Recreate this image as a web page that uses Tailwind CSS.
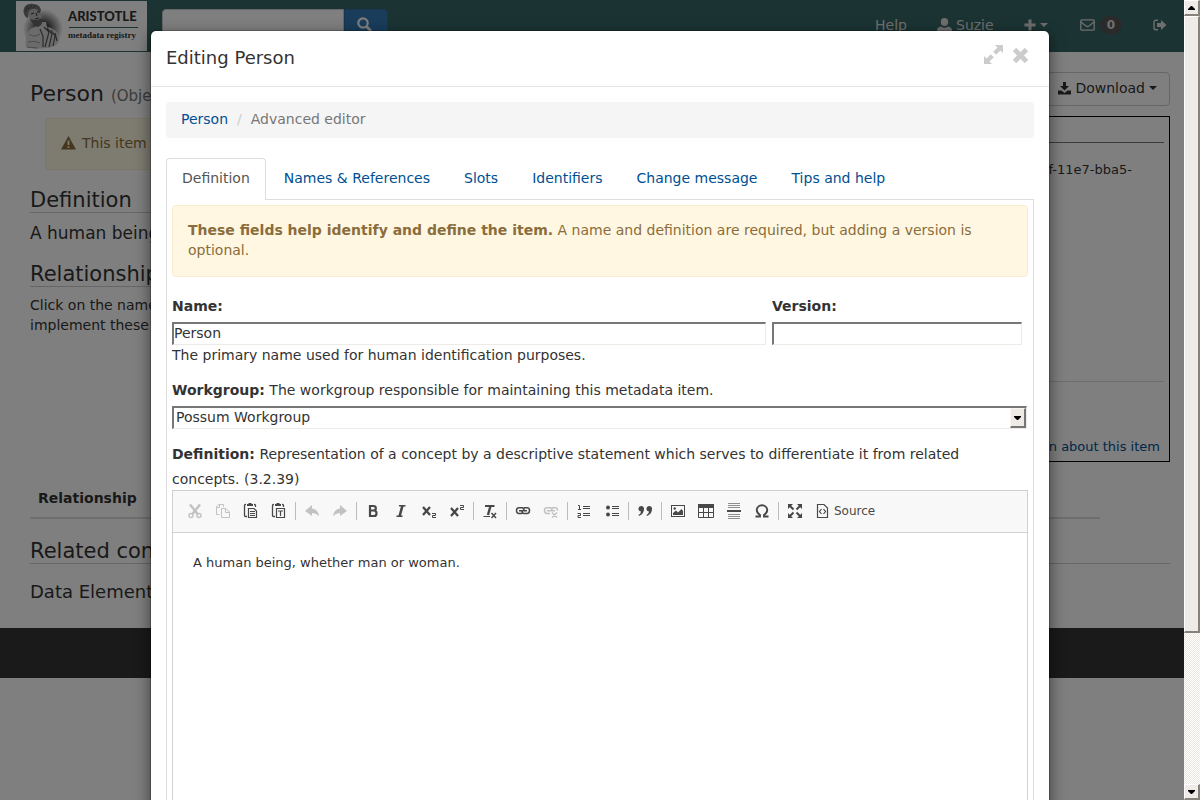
<!DOCTYPE html>
<html lang="en">
<head>
<meta charset="utf-8">
<title>Editing Person</title>
<script src="https://cdn.jsdelivr.net/npm/@tailwindcss/browser@4"></script>
</head>
<body class="relative h-screen overflow-hidden bg-white font-['DejaVu_Sans',sans-serif] text-sm leading-5 text-[#333]">

<!-- Page behind the dialog -->
<div class="mr-4">
  <header class="flex h-[52px] items-start bg-[#376866] pr-[17px] pl-4">
    <a href="#" aria-label="Aristotle metadata registry" class="mt-px block">
      <svg width="131" height="50" viewBox="0 0 131 50">
        <defs><radialGradient id="halo"><stop offset=".3" stop-color="#444"/><stop offset="1" stop-color="#fff"/></radialGradient></defs>
        <rect width="131" height="50" fill="#fff"/>
        <ellipse cx="27" cy="28" rx="20" ry="20" fill="url(#halo)"/>
        <path d="M10 46C9 40 10 31 16 27L21 25L21 21L30 21L31 26C39 27 44 33 43 40C41 45 36 47 30 47C22 48 14 48 10 46Z" fill="#d6d6d6"/>
        <path d="M10 11C10 6 13 4 18 4C22 4 25 8 25 13C26 19 27 22 24 23C19 24 16 21 14 18Z" fill="#bbb"/>
        <path d="M8 13C6 6 11 2 17 3C22 3 25 6 25 10L23 11C21 7 18 7 14 9C12 11 12 14 12 17C10 17 9 15 8 13Z" fill="#777"/>
        <path d="M9 11Q11 8 12 5M12 8Q15 7 16 4M17 7Q19 6 19 4" stroke="#444" stroke-width=".8" fill="none"/>
        <path d="M14 18C16 22 18 25 22 26L25 24C27 21 26 18 25 17C22 20 18 19 14 18Z" fill="#666"/>
        <path d="M15 13L18 12M21 11L24 11M20 12L21 15M19 18L23 17" stroke="#333" fill="none"/>
        <path d="M28 26L33 31L29 46M31 27L36 33L33 46M35 29L39 35L37 45M39 32L41 40M24 28L27 35L27 46" stroke="#555" fill="none" stroke-width="1.200"/>
        <path d="M13 33Q18 37 24 33M12 41Q18 39 24 42M11 46L22 47" stroke="#999" fill="none"/>
        <text x="52" y="20" font-family="Lato, sans-serif" font-weight="900" font-size="13" fill="#333">ARISTOTLE</text>
        <path d="M53 26.500H122" stroke="#376866"/>
        <text x="52" y="37" font-family="Liberation Serif, serif" font-weight="700" font-size="9" fill="#333">metadata registry</text>
      </svg>
    </a>
    <form class="mt-[9px] ml-[15px] flex h-[34px]">
      <input type="search" aria-label="Search" class="w-[182px] rounded-l border border-[#ccc] bg-white px-3">
      <button type="button" aria-label="Submit search" class="flex w-11 items-center justify-center rounded-r border border-[#2e6da4] bg-[#337ab7] pr-1 pb-1">
        <svg width="15" height="15" viewBox="0 0 15 15" fill="none" stroke="#fff"><circle cx="6" cy="6" r="4.7" stroke-width="2.2"/><path d="M9.500 9.500L14 14" stroke-width="2.800"/></svg>
      </button>
    </form>
    <nav class="mt-[15px] ml-auto flex h-5 items-center text-[#ddd]">
      <a href="#" class="mr-[30px]">Help</a>
      <a href="#" class="mr-[30px] flex items-center gap-1"><svg width="15" height="14" viewBox="0 0 15 14" fill="currentColor"><ellipse cx="7.500" cy="4" rx="3.700" ry="4"/><path d="M0 14V12Q0 9.500 4 8.500Q7.500 11 11 8.500Q15 9.500 15 12V14Z"/></svg>Suzie</a>
      <a href="#" aria-label="Create" class="mr-[32px] flex items-center gap-1"><svg width="12" height="12" viewBox="0 0 12 12" stroke="currentColor" stroke-width="3"><path d="M6 .5V11.500M.5 6H11.500"/></svg><svg width="8" height="4" viewBox="0 0 8 4" fill="currentColor"><path d="M0 0H8L4 4Z"/></svg></a>
      <a href="#" class="mr-[31px] flex items-center gap-[5px]"><svg width="15" height="12" viewBox="0 0 15 12" fill="none" stroke="currentColor" stroke-width="1.300"><rect x=".8" y=".8" width="13.400" height="10.400" rx="1"/><path d="M1 3L6 7Q7.500 8 9 7L14 3"/></svg><span class="rounded-[10px] bg-[#555] px-[7px] py-[3px] text-xs leading-3 font-bold">0</span></a>
      <a href="#" aria-label="Log out"><svg width="14" height="12" viewBox="0 0 14 12"><path d="M5 1.200H3Q1 1.200 1 3V9Q1 10.800 3 10.800H5" fill="none" stroke="currentColor" stroke-width="1.400"/><path d="M4 4H8V1L13.500 6L8 11V8H4Z" fill="currentColor"/></svg></a>
    </nav>
  </header>

  <div class="flex gap-5 pr-[14px] pl-[30px]">
    <main class="h-[576px] min-w-0 flex-1 pt-[30px]">
      <h1 class="text-[22px] leading-6">Person <small class="text-[15px] text-[#777]">(Object</small></h1>
      <div class="mt-[10px] ml-[15px] flex h-[52px] items-center gap-[6px] rounded border border-[#faebcc] bg-[#fcf8e3] px-[15px] pb-0.5 text-[#8a6d3b]">
        <svg width="15" height="14" viewBox="0 0 15 14"><path d="M7.500 0L15 13.500H0Z" fill="currentColor"/><path d="M7.500 4.500V9M7.500 10.200V12" stroke="#fcf8e3" stroke-width="1.800"/></svg>
        This item
      </div>
      <h2 class="mt-[19px] border-b border-[#ccc] text-[21px] leading-[23px]">Definition</h2>
      <p class="mt-2 text-[17px] leading-6">A human being</p>
      <h2 class="mt-[18px] border-b border-[#ccc] text-[21px] leading-[23px]">Relationships</h2>
      <p class="mt-2 w-[340px]">Click on the name<br>implement these</p>
      <table class="mt-[145px] w-[1070px]">
        <thead><tr class="border-b-2 border-[#ddd]"><th class="px-2 pt-2 pb-[9px] text-left leading-5">Relationship</th></tr></thead>
      </table>
      <h2 class="mt-5 w-[1140px] border-b border-[#ccc] text-[21px] leading-6">Related content</h2>
      <p class="mt-4 text-lg leading-6">Data Elements</p>
    </main>
    <aside class="w-[260px] pt-5">
      <div class="flex justify-end"><button type="button" class="flex h-[34px] items-center gap-1 rounded border border-[#ccc] px-3 pb-0.5"><svg width="13" height="13" viewBox="0 0 13 13" fill="currentColor"><path d="M5 0H8V4H11L6.500 8.500L2 4H5Z"/><path d="M0 8.500H3.500L6.500 11L9.500 8.500H13V12.500H0Z"/></svg>Download<svg width="8" height="4" viewBox="0 0 8 4" fill="currentColor"><path d="M0 0H8L4 4Z"/></svg></button></div>
      <div class="mt-[10px] flex h-[346px] flex-col border border-black px-[5px] text-right text-[13px]">
        <div class="h-[26px] border-b border-[#777]"></div>
        <p class="mt-[17px] pr-8">4c1b7e2f-11e7-bba5-</p>
        <div class="mt-auto border-b border-[#ddd]"></div>
        <a href="#" class="mt-[55px] mr-1 mb-1 text-[#004f92]">More information about this item</a>
      </div>
    </aside>
  </div>
  <footer class="h-[50px] bg-[#343434]"></footer>
</div>

<!-- Backdrop and dialog -->
<div class="absolute inset-y-0 right-4 left-0 bg-black/50"></div>
<div class="absolute inset-0 overflow-hidden pt-[30px]">
  <section role="dialog" aria-label="Editing Person" class="mx-auto max-w-[900px] rounded-md border border-black/20 bg-white bg-clip-padding shadow-[0_5px_15px_rgba(0,0,0,0.5)]">
    <div class="flex h-14 justify-between border-b border-[#e5e5e5] px-[15px] pt-[14px]">
      <h4 class="text-lg leading-[26px]">Editing Person</h4>
      <div class="flex gap-[10px] pr-[6px] text-[#ccc]">
        <button type="button" aria-label="Expand" class="h-[19px]"><svg width="19" height="19" viewBox="0 0 19 19"><path d="M11 0H19V8L16.500 5.500L12.200 9.800L9.200 6.800L13.500 2.500ZM0 11L2.500 13.500L6.800 9.200L9.800 12.200L5.500 16.500L8 19H0Z" fill="currentColor"/><path d="M7.500 7.500L11.500 11.500" stroke="#fff" stroke-width="2.500"/></svg></button>
        <button type="button" aria-label="Close" class="mt-[3px] h-[15px]"><svg width="15" height="15" viewBox="0 0 15 15" stroke="currentColor" stroke-width="4.800" stroke-linejoin="round"><path d="M1.500 1.500L13.500 13.500M13.500 1.500L1.500 13.500"/></svg></button>
      </div>
    </div>
    <div class="p-[15px]">
      <nav aria-label="Breadcrumb" class="flex h-9 items-center rounded bg-[#f5f5f5] px-[15px] pb-0.5">
        <a href="#" class="text-[#004f92]">Person</a><span class="px-[9px] text-[#ccc]">/</span><span class="text-[#777]">Advanced editor</span>
      </nav>
      <div class="mt-5 flex border-b border-[#ddd] leading-5 text-[#004f92]">
        <a href="#" class="-mb-px mr-0.5 rounded-t border border-b-0 border-[#ddd] bg-white px-[15px] pt-[9px] pb-3 text-[#555]">Definition</a>
        <a href="#" class="mr-0.5 px-4 pt-[10px]">Names &amp; References</a>
        <a href="#" class="mr-0.5 px-4 pt-[10px]">Slots</a>
        <a href="#" class="mr-0.5 px-4 pt-[10px]">Identifiers</a>
        <a href="#" class="mr-0.5 px-4 pt-[10px]">Change message</a>
        <a href="#" class="px-4 pt-[10px]">Tips and help</a>
      </div>
      <div class="border-x border-[#ddd] px-[5px] pt-[5px]">
        <div class="rounded border border-[#faebcc] bg-[#fff7e2] px-[15px] pt-[14px] pb-4 text-[#8a6d3b]"><strong>These fields help identify and define the item.</strong> A name and definition are required, but adding a version is optional.</div>
        <div class="mt-[19px] flex gap-[6px] pr-[6px]">
          <div class="flex-1">
            <label for="name" class="block font-bold">Name:</label>
            <input id="name" value="Person" class="mt-[6px] block h-[23px] w-full border-t-2 border-r border-b border-l-2 border-t-[#777] border-r-[#eeebe7] border-b-[#eeebe7] border-l-[#777] bg-white pb-0.5">
            <p>The primary name used for human identification purposes.</p>
          </div>
          <div class="w-[250px]">
            <label for="version" class="block font-bold">Version:</label>
            <input id="version" class="mt-[6px] block h-[23px] w-full border-t-2 border-r border-b border-l-2 border-t-[#777] border-r-[#eeebe7] border-b-[#eeebe7] border-l-[#777] bg-white">
          </div>
        </div>
        <p class="mt-[15px]"><label for="workgroup" class="font-bold">Workgroup:</label> The workgroup responsible for maintaining this metadata item.</p>
        <div class="relative mt-[6px] mr-px">
          <select id="workgroup" class="block h-[23px] w-full appearance-none border-t-2 border-r border-b border-l-2 border-t-[#777] border-r-[#eeebe7] border-b-[#eeebe7] border-l-[#777] bg-white pb-0.5 pl-0.5 leading-[18px]"><option>Possum Workgroup</option></select>
          <span class="pointer-events-none absolute top-0.5 right-px flex h-5 w-4 items-center justify-center border-t border-r-2 border-b-2 border-l border-t-[#f8f6f3] border-r-[#777] border-b-[#777] border-l-[#f8f6f3] bg-[#eeebe7]"><svg width="7" height="4" viewBox="0 0 7 4"><path d="M0 0H7V1L4 4H3L0 1Z"/></svg></span>
        </div>
        <p class="mt-[13px] leading-[25px]"><strong>Definition:</strong> Representation of a concept by a descriptive statement which serves to differentiate it from related concepts. (3.2.39)</p>
        <div class="-mt-0.5 h-[420px] border border-[#d1d1d1]">
          <div role="toolbar" aria-label="Editor" class="flex h-[42px] items-center border-b border-[#d1d1d1] bg-[#f8f8f8] pb-px pl-2 text-[#484848]">
            <button type="button" aria-label="Cut" class="flex h-7 w-7 items-center justify-center opacity-30"><svg width="16" height="16" viewBox="0 0 16 16" fill="none" stroke="currentColor"><path d="M3 1.500L11 11.500M13 1.500L5 11.500" stroke-width="2.400"/><circle cx="4" cy="12.500" r="2" stroke-width="1.400"/><circle cx="12" cy="12.500" r="2" stroke-width="1.400"/></svg></button>
            <button type="button" aria-label="Copy" class="flex h-7 w-7 items-center justify-center opacity-30"><svg width="16" height="16" viewBox="0 0 16 16" fill="none" stroke="currentColor"><path d="M4.500 11.500H1.500V3.500L4 1.500H8.500V4M6.500 5.500H11L14.500 9V14.500H6.500ZM10.500 5.500V9.500H14.500M4.500 1.500V4.500H1.500"/></svg></button>
            <button type="button" aria-label="Paste" class="flex h-7 w-7 items-center justify-center"><svg width="16" height="16" viewBox="0 0 16 16" fill="none" stroke="currentColor"><path d="M3 1.500H2.500Q1.500 1.500 1.500 2.500V12.500Q1.500 13.500 2.500 13.500H4M11 1.500H11.500Q12.500 1.500 12.500 2.500V4" stroke-width="1.300"/><path d="M4 1H5.500V0H8.500V1H10V3H4Z" fill="currentColor" stroke="none"/><path d="M5.500 5.500H11L13.500 8V14.500H5.500ZM7 8.500H12M7 10.500H12M7 12.500H12" stroke-width="1.200"/></svg></button>
            <button type="button" aria-label="Paste as plain text" class="flex h-7 w-7 items-center justify-center"><svg width="16" height="16" viewBox="0 0 16 16" fill="none" stroke="currentColor"><path d="M3 1.500H2.500Q1.500 1.500 1.500 2.500V12.500Q1.500 13.500 2.500 13.500H4M11 1.500H11.500Q12.500 1.500 12.500 2.500V4" stroke-width="1.300"/><path d="M4 1H5.500V0H8.500V1H10V3H4Z" fill="currentColor" stroke="none"/><path d="M5.500 5.500H13.500V14.500H5.500ZM7 8H12M9.500 8V13" stroke-width="1.200"/></svg></button>
            <span class="mx-[2px] h-[18px] w-px bg-[#bcbcbc]"></span>
            <button type="button" aria-label="Undo" class="flex h-7 w-7 items-center justify-center opacity-30"><svg width="16" height="16" viewBox="0 0 16 16" fill="currentColor"><path d="M1 8L8 2V5.500Q14 6 15 13Q12 10 8 10V13Z"/></svg></button>
            <button type="button" aria-label="Redo" class="flex h-7 w-7 items-center justify-center opacity-30"><svg width="16" height="16" viewBox="0 0 16 16" fill="currentColor"><path d="M15 8L8 2V5.500Q2 6 1 13Q4 10 8 10V13Z"/></svg></button>
            <span class="mx-[2px] h-[18px] w-px bg-[#bcbcbc]"></span>
            <button type="button" aria-label="Bold" class="flex h-7 w-7 items-center justify-center"><svg width="16" height="16" viewBox="0 0 16 16" fill="none" stroke="currentColor"><path d="M5 3H8.500Q10.800 3 10.800 5.200Q10.800 7.500 8.500 7.500H5M5 7.500H9Q11.500 7.500 11.500 10.200Q11.500 13 9 13H5M5 2V14" stroke-width="2.200"/></svg></button>
            <button type="button" aria-label="Italic" class="flex h-7 w-7 items-center justify-center"><svg width="16" height="16" viewBox="0 0 16 16" fill="none" stroke="currentColor"><path d="M6 2.800H12.500M3.500 13.200H9.500" stroke-width="1.600"/><path d="M9.500 2.500L6.500 13.500" stroke-width="2.600"/></svg></button>
            <button type="button" aria-label="Subscript" class="flex h-7 w-7 items-center justify-center"><svg width="16" height="16" viewBox="0 0 16 16" fill="none" stroke="currentColor"><path d="M2 4L9 12M9 4L2 12" stroke-width="2.300"/><path d="M11 10.500H14.500V12.500H11.500V14.500H15"/></svg></button>
            <button type="button" aria-label="Superscript" class="flex h-7 w-7 items-center justify-center"><svg width="16" height="16" viewBox="0 0 16 16" fill="none" stroke="currentColor"><path d="M2 5L9 13M9 5L2 13" stroke-width="2.300"/><path d="M11 2.500H14.500V4.500H11.500V6.500H15"/></svg></button>
            <span class="mx-[2px] h-[18px] w-px bg-[#bcbcbc]"></span>
            <button type="button" aria-label="Remove format" class="flex h-7 w-7 items-center justify-center"><svg width="16" height="16" viewBox="0 0 16 16" fill="none" stroke="currentColor"><path d="M3 3H12.500" stroke-width="2"/><path d="M8.500 3L6 12" stroke-width="2.400"/><path d="M1.500 13.500H8"/><path d="M9.500 10L14 15M14 10L9.500 15" stroke-width="1.500"/></svg></button>
            <span class="mx-[2px] h-[18px] w-px bg-[#bcbcbc]"></span>
            <button type="button" aria-label="Link" class="flex h-7 w-7 items-center justify-center"><svg width="16" height="16" viewBox="0 0 16 16" fill="none" stroke="currentColor" stroke-width="1.500"><path d="M7 10.500H4Q1.500 10.500 1.500 7.500Q1.500 4.800 4 4.800H7Q9 5 9 7M9 4.800H12Q14.500 4.800 14.500 7.500Q14.500 10.500 12 10.500H9Q7 10.500 7 8M4 7.700H12"/></svg></button>
            <button type="button" aria-label="Unlink" class="flex h-7 w-7 items-center justify-center opacity-30"><svg width="16" height="16" viewBox="0 0 16 16" fill="none" stroke="currentColor" stroke-width="1.500"><path d="M7 10.500H4Q1.500 10.500 1.500 7.500Q1.500 4.800 4 4.800H7Q9 5 9 7M9 4.800H12Q14.500 4.800 14.500 7.500M4 7.700H12M9 9.500L14 14.500M14 9.500L9 14.500"/></svg></button>
            <span class="mx-[2px] h-[18px] w-px bg-[#bcbcbc]"></span>
            <button type="button" aria-label="Numbered list" class="flex h-7 w-7 items-center justify-center"><svg width="16" height="16" viewBox="0 0 16 16" fill="none" stroke="currentColor"><path d="M2 2.500H3.500V7M2 6.500H5M1.500 10.500H4.500V12.500H2V14.500H5"/><path d="M7 3.500H14M7 5.500H14M7 10.500H14M7 12.500H14"/></svg></button>
            <button type="button" aria-label="Bulleted list" class="flex h-7 w-7 items-center justify-center"><svg width="16" height="16" viewBox="0 0 16 16" fill="none" stroke="currentColor"><path d="M8 3.500H15M8 5.500H15M8 10.500H15M8 12.500H15"/><circle cx="4" cy="4.500" r="2" fill="currentColor" stroke="none"/><circle cx="4" cy="11.500" r="2" fill="currentColor" stroke="none"/></svg></button>
            <span class="mx-[2px] h-[18px] w-px bg-[#bcbcbc]"></span>
            <button type="button" aria-label="Block quote" class="flex h-7 w-7 items-center justify-center"><svg width="16" height="16" viewBox="0 0 16 16" fill="currentColor"><path d="M7 6Q7 11 2 13L1.500 12Q4 10.500 4 8.500A2.800 2.800 0 1 1 7 6ZM15 6Q15 11 10 13L9.500 12Q12 10.500 12 8.500A2.800 2.800 0 1 1 15 6Z"/></svg></button>
            <span class="mx-[2px] h-[18px] w-px bg-[#bcbcbc]"></span>
            <button type="button" aria-label="Image" class="flex h-7 w-7 items-center justify-center"><svg width="16" height="16" viewBox="0 0 16 16"><rect x="1.500" y="2.500" width="13" height="11" fill="none" stroke="currentColor"/><path d="M3 12V10L6 7.500L8 9.500L11.500 6L13 8V12Z" fill="currentColor"/><circle cx="4.700" cy="5.500" r="1.200" fill="currentColor"/></svg></button>
            <button type="button" aria-label="Table" class="flex h-7 w-7 items-center justify-center"><svg width="16" height="16" viewBox="0 0 16 16" fill="none" stroke="currentColor"><path d="M.5 5V14.500H15.500V5M5.500 5V14M10.500 5V14M1 9.500H15"/><path d="M0 3H16" stroke-width="4"/></svg></button>
            <button type="button" aria-label="Horizontal line" class="flex h-7 w-7 items-center justify-center"><svg width="16" height="16" viewBox="0 0 16 16" fill="none" stroke="currentColor"><path d="M2 .5H14M2 2.500H14M2 4.500H14M2 11.500H14M2 13.500H14M2 15.500H14" opacity=".6"/><path d="M1 8H15" stroke-width="2"/></svg></button>
            <button type="button" aria-label="Special character" class="flex h-7 w-7 items-center justify-center"><svg width="16" height="16" viewBox="0 0 16 16" fill="none" stroke="currentColor" stroke-width="1.900"><path d="M1.500 13.500H6V12Q2.800 10 2.800 7A5.200 4.800 0 0 1 13.200 7Q13.200 10 10 12V13.500H14.500"/></svg></button>
            <span class="mx-[2px] h-[18px] w-px bg-[#bcbcbc]"></span>
            <button type="button" aria-label="Maximize" class="flex h-7 w-7 items-center justify-center"><svg width="16" height="16" viewBox="0 0 16 16"><path d="M1 1H6L1 6ZM15 1V6L10 1ZM1 15V10L6 15ZM15 15H10L15 10Z" fill="currentColor"/><path d="M2.500 2.500L6.500 6.500M13.500 2.500L9.500 6.500M2.500 13.500L6.500 9.500M13.500 13.500L9.500 9.500" stroke="currentColor" stroke-width="2"/></svg></button>
            <button type="button" class="flex h-7 items-center gap-1 px-[5px] text-xs"><svg width="16" height="16" viewBox="0 0 16 16" fill="none" stroke="currentColor" stroke-width="1.200"><path d="M3.500 1.500H10L13.500 5V14.500H3.500ZM7.500 6L5.500 8.500L7.500 11M9.500 6L11.500 8.500L9.500 11"/></svg>Source</button>
          </div>
          <div contenteditable="true" role="textbox" aria-label="Definition" class="p-5 text-[13px]">A human being, whether man or woman.</div>
        </div>
      </div>
    </div>
  </section>
</div>

<!-- Window scrollbar -->
<div class="absolute inset-y-0 right-0 flex w-4 flex-col bg-[repeating-conic-gradient(#ebe7e1_0_25%,#fff_0_50%)] bg-[length:2px_2px]">
  <button type="button" aria-label="Scroll up" class="flex h-4 items-center justify-center border-t border-r-2 border-b-2 border-l border-t-white border-r-[#88827c] border-b-[#88827c] border-l-white bg-[#efebe7]"><svg width="7" height="4" viewBox="0 0 7 4"><path d="M3 0H4L7 3V4H0V3Z"/></svg></button>
  <div class="h-[617px] border-t border-r-2 border-b-2 border-l border-t-white border-r-[#88827c] border-b-[#88827c] border-l-white bg-[#efebe7]"></div>
  <button type="button" aria-label="Scroll down" class="mt-auto flex h-4 items-center justify-center border-t border-r-2 border-b-2 border-l border-t-white border-r-[#88827c] border-b-[#88827c] border-l-white bg-[#efebe7]"><svg width="7" height="4" viewBox="0 0 7 4"><path d="M0 0H7V1L4 4H3L0 1Z"/></svg></button>
</div>
</body>
</html>
